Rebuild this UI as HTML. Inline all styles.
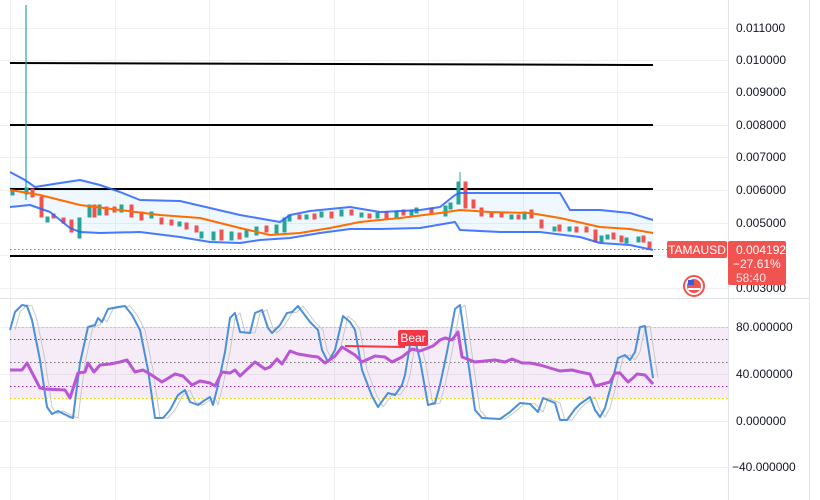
<!DOCTYPE html>
<html><head><meta charset="utf-8"><style>
html,body{margin:0;padding:0;background:#fff;}
svg{display:block;font-family:"Liberation Sans",sans-serif;}
</style></head><body>
<svg width="820" height="500" viewBox="0 0 820 500" xmlns="http://www.w3.org/2000/svg">
<rect width="820" height="500" fill="#fff"/>
<!-- grid -->
<g stroke="#eef0f3" stroke-width="1">
<line x1="10.5" y1="0" x2="10.5" y2="500"/>
<line x1="115.5" y1="0" x2="115.5" y2="500"/>
<line x1="209.5" y1="0" x2="209.5" y2="500"/>
<line x1="334.5" y1="0" x2="334.5" y2="500"/>
<line x1="428.5" y1="0" x2="428.5" y2="500"/>
<line x1="523.5" y1="0" x2="523.5" y2="500"/>
<line x1="617.5" y1="0" x2="617.5" y2="500"/>
<line x1="0" y1="28.5" x2="728" y2="28.5"/>
<line x1="0" y1="60.5" x2="728" y2="60.5"/>
<line x1="0" y1="92.5" x2="728" y2="92.5"/>
<line x1="0" y1="125.5" x2="728" y2="125.5"/>
<line x1="0" y1="157.5" x2="728" y2="157.5"/>
<line x1="0" y1="190.5" x2="728" y2="190.5"/>
<line x1="0" y1="223.5" x2="728" y2="223.5"/>
<line x1="0" y1="255.5" x2="728" y2="255.5"/>
<line x1="0" y1="288.5" x2="728" y2="288.5"/>
<line x1="0" y1="327.5" x2="728" y2="327.5"/>
<line x1="0" y1="374.5" x2="728" y2="374.5"/>
<line x1="0" y1="421.5" x2="728" y2="421.5"/>
<line x1="0" y1="467.5" x2="728" y2="467.5"/>
</g>
<line x1="0" y1="298.5" x2="810" y2="298.5" stroke="#e0e3eb"/>
<line x1="728.5" y1="0" x2="728.5" y2="500" stroke="#e0e3eb"/>
<line x1="809.5" y1="0" x2="809.5" y2="500" stroke="#e0e3eb"/>

<!-- bollinger fill -->
<path d="M10,172 L25,180 L35,187 L60,183 L80,180 L100,185 L120,192 L140,200 L180,201 L210,208 L240,215 L280,222 L290,215 L310,211 L350,207 L380,212 L420,210 L440,207 L455,195 L460,193 L560,193 L570,210 L600,210 L630,213 L653,220 L653,250 L630,245 L600,243 L580,237 L540,232 L500,232 L460,230 L455,222 L420,228 L380,229 L350,229 L320,233 L290,238 L260,240 L240,243 L210,242 L180,237 L140,232 L100,233 L80,232 L70,228 L50,212 L30,205 L10,207 Z" fill="#2196f3" fill-opacity="0.07"/>
<!-- black levels -->
<g stroke="#000" stroke-width="2">
<line x1="10" y1="63" x2="653" y2="65"/>
<line x1="10" y1="125" x2="653" y2="125"/>
<line x1="10" y1="189" x2="653" y2="189"/>
<line x1="10" y1="256" x2="653" y2="256"/>
</g>
<line x1="26" y1="5" x2="26" y2="200" stroke="#26a69a" stroke-width="1.2"/>
<line x1="10" y1="249.5" x2="667" y2="249.5" stroke="#f05350" stroke-dasharray="1.5,2.5"/>
<!-- candles -->
<g stroke-width="1">
<g fill="#26a69a" stroke="#26a69a">
<rect x="11" y="190" width="3" height="5"/><rect x="25" y="188" width="3" height="6"/>
<rect x="46" y="217" width="3" height="5"/><rect x="78" y="218" width="3" height="20"/>
<rect x="88" y="205" width="3" height="12"/><rect x="98" y="205" width="3" height="10"/>
<rect x="120" y="205" width="3" height="7"/><rect x="150" y="212" width="3" height="6"/>
<rect x="178" y="222" width="3" height="4"/><rect x="200" y="232" width="3" height="6"/>
<rect x="212" y="232" width="3" height="8"/><rect x="230" y="232" width="3" height="8"/>
<rect x="245" y="230" width="3" height="7"/><rect x="255" y="227" width="3" height="8"/>
<rect x="275" y="225" width="3" height="8"/><rect x="283" y="218" width="3" height="14"/>
<rect x="288" y="215" width="3" height="6"/><rect x="305" y="215" width="3" height="4"/>
<rect x="320" y="212" width="3" height="5"/><rect x="340" y="210" width="3" height="6"/>
<rect x="360" y="213" width="3" height="4"/><rect x="376" y="213" width="3" height="5"/>
<rect x="395" y="211" width="3" height="6"/><rect x="410" y="210" width="3" height="5"/>
<rect x="415" y="208" width="3" height="5"/><rect x="444" y="206" width="3" height="10"/>
<rect x="449" y="203" width="3" height="6"/><rect x="457" y="182" width="3" height="22"/>
<line x1="460" y1="172" x2="460" y2="200"/>
<rect x="510" y="215" width="3" height="4"/><rect x="523" y="212" width="3" height="7"/>
<rect x="553" y="227" width="3" height="4"/><rect x="568" y="227" width="3" height="4"/>
<rect x="600" y="236" width="3" height="6"/><rect x="606" y="235" width="3" height="4"/>
<rect x="625" y="238" width="3" height="5"/><rect x="637" y="237" width="3" height="5"/>
</g>
<g fill="#ef5350" stroke="#ef5350">
<rect x="31" y="189" width="3" height="8"/><rect x="40" y="197" width="3" height="20"/>
<rect x="52" y="214" width="3" height="4"/><rect x="62" y="218" width="3" height="5"/>
<rect x="70" y="220" width="3" height="12"/><rect x="93" y="205" width="3" height="12"/>
<rect x="105" y="207" width="3" height="8"/><rect x="113" y="207" width="3" height="5"/>
<rect x="130" y="205" width="3" height="12"/><rect x="140" y="212" width="3" height="8"/>
<rect x="160" y="218" width="3" height="6"/><rect x="170" y="220" width="3" height="5"/>
<rect x="185" y="223" width="3" height="6"/><rect x="195" y="226" width="3" height="6"/>
<rect x="220" y="230" width="3" height="10"/><rect x="238" y="233" width="3" height="6"/>
<rect x="265" y="226" width="3" height="6"/><rect x="298" y="215" width="3" height="4"/>
<rect x="313" y="214" width="3" height="5"/><rect x="330" y="212" width="3" height="6"/>
<rect x="350" y="210" width="3" height="5"/><rect x="368" y="214" width="3" height="4"/>
<rect x="385" y="212" width="3" height="6"/><rect x="402" y="210" width="3" height="5"/>
<rect x="430" y="208" width="3" height="5"/><rect x="464" y="182" width="3" height="26"/>
<rect x="472" y="200" width="3" height="8"/><rect x="480" y="208" width="3" height="8"/>
<rect x="490" y="213" width="3" height="4"/><rect x="500" y="213" width="3" height="4"/>
<rect x="517" y="215" width="3" height="4"/><rect x="530" y="210" width="3" height="8"/>
<rect x="540" y="220" width="3" height="8"/><rect x="558" y="225" width="3" height="6"/>
<rect x="575" y="227" width="3" height="5"/><rect x="585" y="227" width="3" height="5"/>
<rect x="594" y="230" width="3" height="12"/><rect x="612" y="233" width="3" height="6"/>
<rect x="620" y="236" width="3" height="6"/><rect x="642" y="236" width="3" height="6"/>
<rect x="648" y="242" width="3" height="6"/>
</g>
</g>
<!-- bands -->
<g fill="none" stroke-linejoin="round" stroke-width="2">
<polyline stroke="#2962ff" stroke-opacity="0.85" points="10,172 25,180 35,187 60,183 80,180 100,185 120,192 140,200 180,201 210,208 240,215 280,222 290,215 310,211 350,207 380,212 420,210 440,207 455,195 460,193 560,193 570,210 600,210 630,213 653,220"/>
<polyline stroke="#2962ff" stroke-opacity="0.85" points="10,207 30,205 50,212 70,228 80,232 100,233 140,232 180,237 210,242 240,243 260,240 290,238 320,233 350,229 380,229 420,228 455,222 460,230 500,232 540,232 580,237 600,243 630,245 653,250"/>
<polyline stroke="#ff6d00" points="10,190 40,195 80,205 120,210 160,215 200,218 240,228 270,235 300,233 330,228 360,222 400,218 440,213 460,210 490,212 530,213 560,218 600,227 630,229 653,233"/>
</g>
<!-- RSI pane -->
<rect x="10" y="327" width="718" height="71" fill="#9c27b0" fill-opacity="0.09"/>
<g stroke-width="1" stroke-dasharray="1.5,2.5">
<line x1="10" y1="327.5" x2="728" y2="327.5" stroke="#e6c800"/>
<line x1="10" y1="398.5" x2="728" y2="398.5" stroke="#e6c800"/>
<line x1="10" y1="339.5" x2="728" y2="339.5" stroke="#9c27b0"/>
<line x1="10" y1="386.5" x2="728" y2="386.5" stroke="#9c27b0"/>
<line x1="10" y1="362.5" x2="728" y2="362.5" stroke="#777"/>
</g>
<g fill="none" stroke-linejoin="round">
<polyline stroke="#c8c8c8" stroke-width="1" transform="translate(5,0)" points="10,330 15,312 22,305 27,306 32,320 40,360 47,407 52,414 58,411 70,417 73,418 80,363 88,327 95,325 98,318 102,322 108,309 118,307 125,306 132,315 140,330 148,370 155,418 163,418 170,410 178,395 185,390 190,402 198,405 205,400 210,397 213,405 218,385 225,352 230,318 235,313 240,332 250,333 255,313 262,310 268,328 272,333 280,325 287,313 292,312 298,306 310,322 318,330 322,350 328,362 335,350 343,316 350,322 355,330 362,370 372,396 378,407 388,393 395,395 402,385 405,375 410,345 415,340 420,360 428,405 435,403 440,385 447,352 455,309 460,305 470,375 475,410 482,418 500,419 510,412 520,403 530,404 538,412 543,398 555,403 560,420 567,420 575,409 580,404 590,397 595,410 600,417 605,408 612,382 618,358 625,355 630,360 635,352 640,327 645,326 653,378"/>
<polyline stroke="#4a90d9" stroke-width="2" points="10,330 15,312 22,305 27,306 32,320 40,360 47,407 52,414 58,411 70,417 73,418 80,363 88,327 95,325 98,318 102,322 108,309 118,307 125,306 132,315 140,330 148,370 155,418 163,418 170,410 178,395 185,390 190,402 198,405 205,400 210,397 213,405 218,385 225,352 230,318 235,313 240,332 250,333 255,313 262,310 268,328 272,333 280,325 287,313 292,312 298,306 310,322 318,330 322,350 328,362 335,350 343,316 350,322 355,330 362,370 372,396 378,407 388,393 395,395 402,385 405,375 410,345 415,340 420,360 428,405 435,403 440,385 447,352 455,309 460,305 470,375 475,410 482,418 500,419 510,412 520,403 530,404 538,412 543,398 555,403 560,420 567,420 575,409 580,404 590,397 595,410 600,417 605,408 612,382 618,358 625,355 630,360 635,352 640,327 645,326 653,378"/>
<polyline stroke="#ba55d3" stroke-width="3" points="10,370 22,370 27,363 40,388 45,389 65,390 70,398 78,373 85,372 88,363 94,372 100,365 110,364 120,362 127,360 135,372 143,370 150,374 162,382 175,374 183,376 192,385 200,381 210,383 215,386 222,372 230,373 235,370 240,376 255,362 265,369 270,367 277,359 282,364 290,351 298,354 310,356 318,357 325,363 335,356 342,347 355,355 362,362 375,356 385,357 392,362 402,357 412,349 420,351 433,346 440,340 445,338 452,340 458,332 462,357 475,362 485,361 495,360 505,362 512,359 522,363 530,363 540,365 550,368 560,371 572,370 580,372 590,374 595,386 610,382 615,373 620,373 628,382 633,378 637,374 645,375 653,384"/>
</g>
<line x1="345" y1="346" x2="405" y2="347" stroke="#f23645" stroke-width="2"/>
<rect x="398" y="330" width="30" height="16" rx="2" fill="#f23645"/>
<text x="413" y="342" fill="#fff" font-size="12" text-anchor="middle">Bear</text>
<!-- price axis -->
<g font-size="12" fill="#131722">
<text x="736" y="32">0.011000</text>
<text x="736" y="64">0.010000</text>
<text x="736" y="96">0.009000</text>
<text x="736" y="129">0.008000</text>
<text x="736" y="161">0.007000</text>
<text x="736" y="194">0.006000</text>
<text x="736" y="227">0.005000</text>
<text x="736" y="292">0.003000</text>
<text x="736" y="331">80.000000</text>
<text x="736" y="378">40.000000</text>
<text x="736" y="425">0.000000</text>
<text x="732" y="471">−40.000000</text>
</g>
<rect x="667" y="241" width="60" height="17" rx="2" fill="#f05350"/>
<text x="697" y="254" fill="#fff" font-size="12" text-anchor="middle">TAMAUSD</text>
<rect x="728" y="241" width="58" height="44" rx="2" fill="#f05350"/>
<g font-size="12" fill="#fff">
<text x="736" y="254">0.004192</text>
<text x="733" y="268">−27.61%</text>
<text x="736" y="282" fill="#ffe3e3">58:40</text>
</g>
<circle cx="694" cy="286" r="10" fill="#fff" stroke="#f05350" stroke-width="2"/>
<circle cx="694" cy="286" r="7" fill="#f05350"/>
<rect x="688" y="288" width="12" height="2" fill="#fff"/>
<rect x="688" y="280" width="6" height="5" fill="#3b5bdb"/>
</svg>
</body></html>
